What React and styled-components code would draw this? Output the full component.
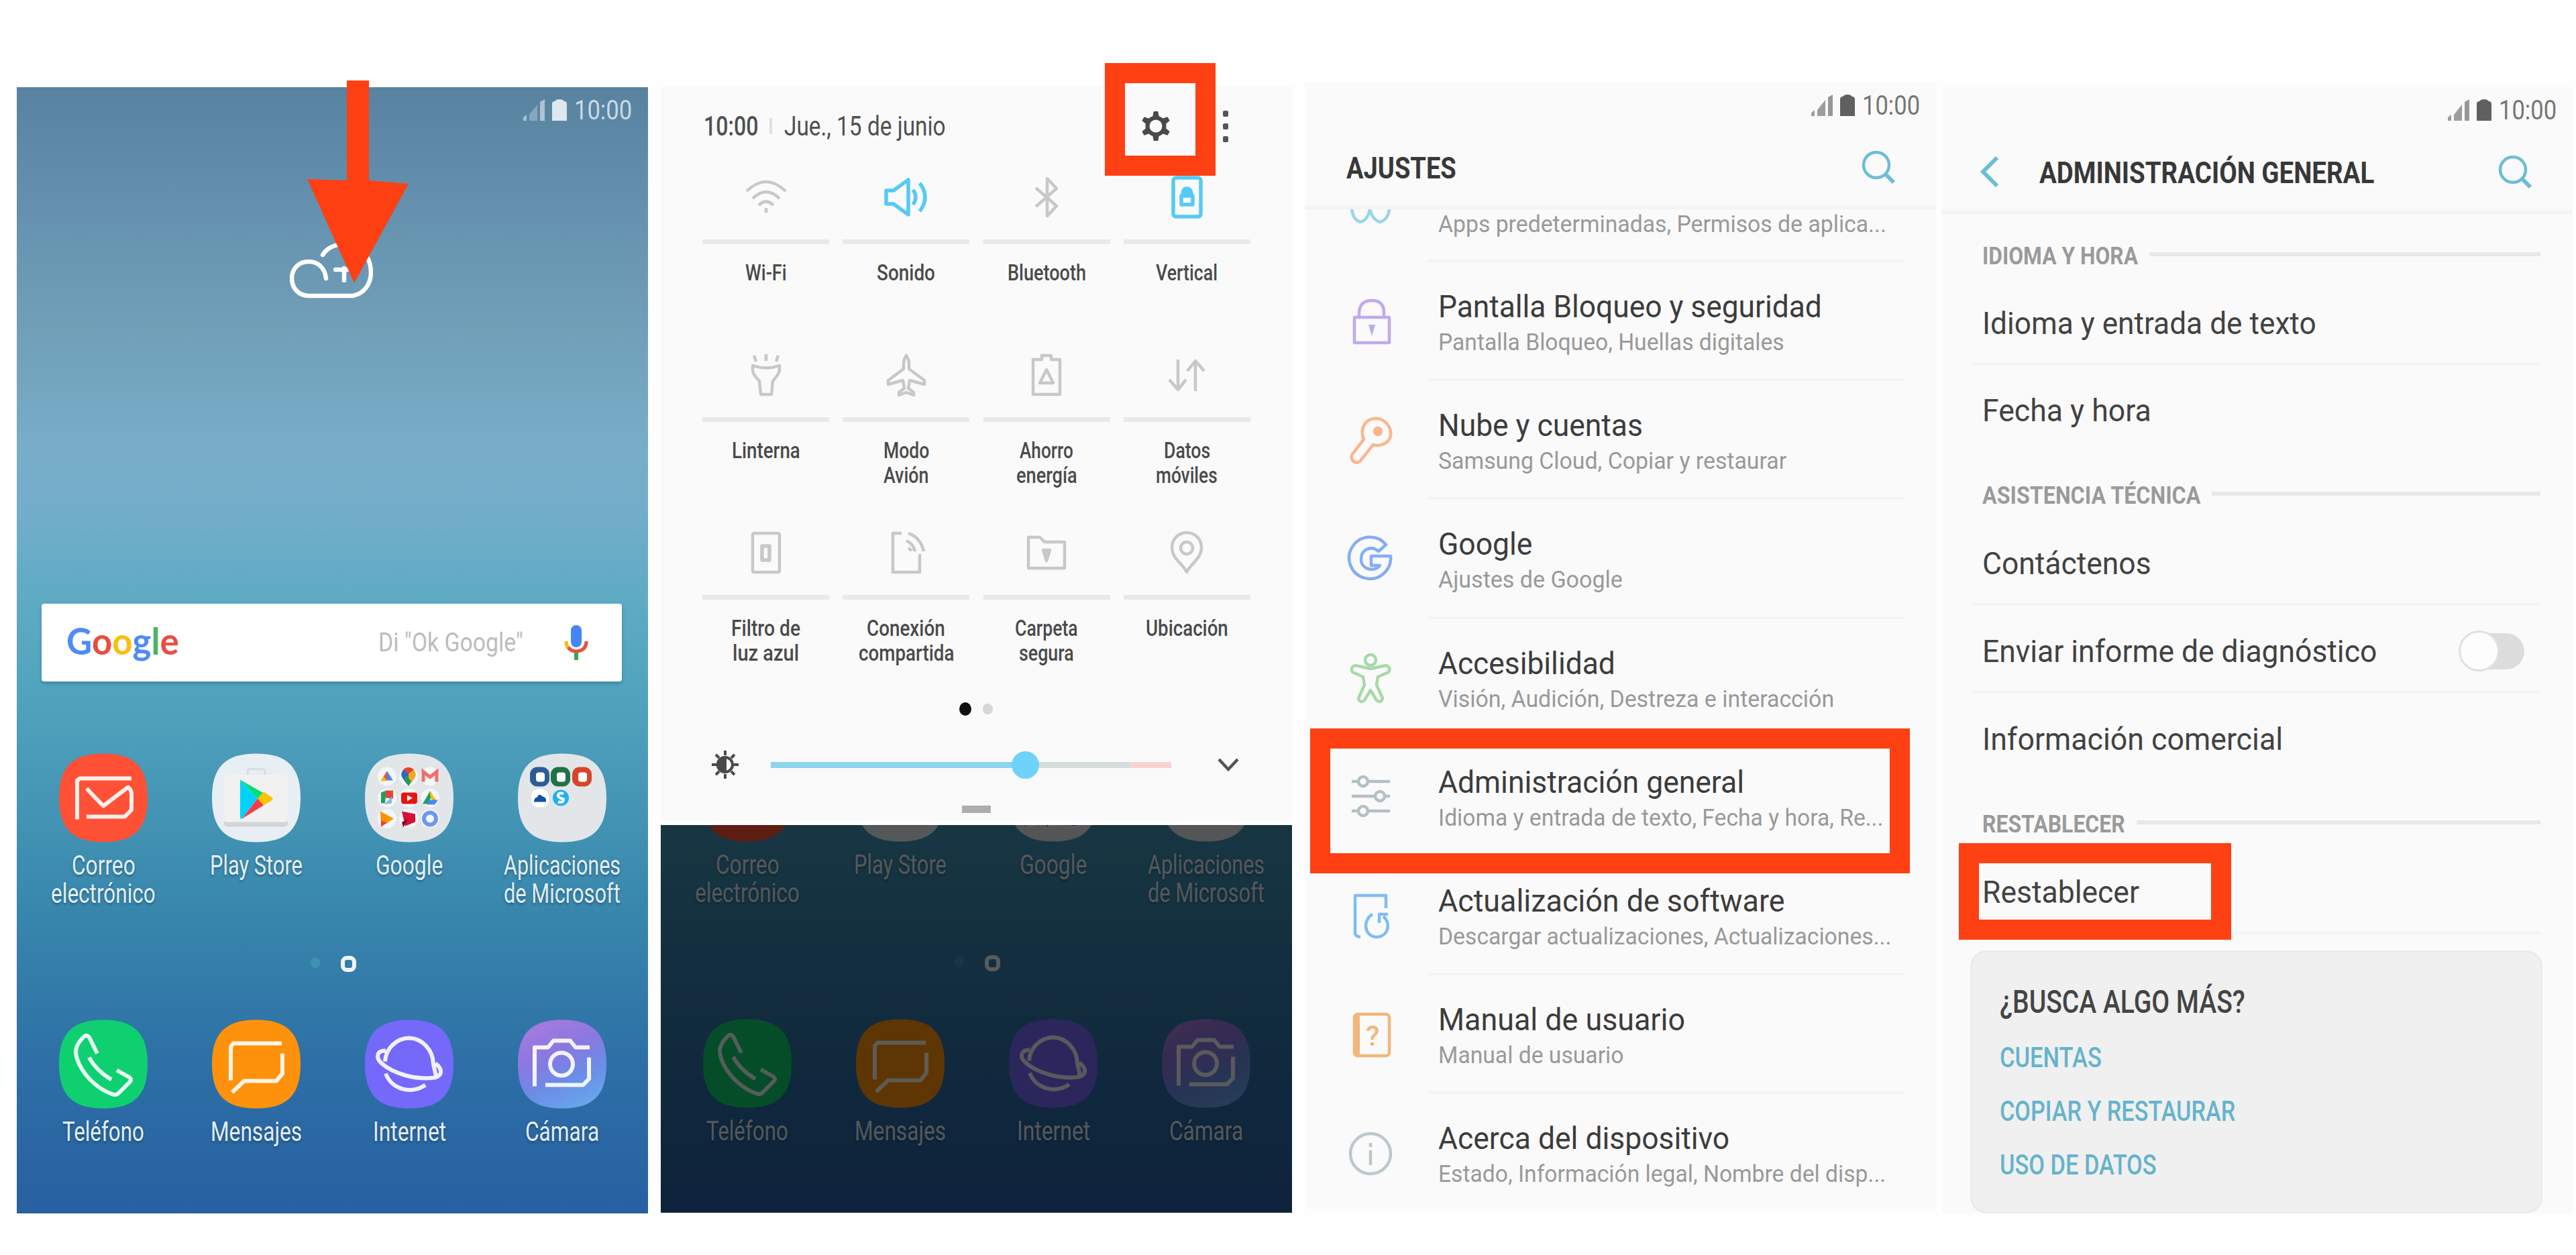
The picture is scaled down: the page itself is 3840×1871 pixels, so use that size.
import { useLayoutEffect, useRef, useState } from 'react';
import styled, { createGlobalStyle, css } from 'styled-components';

const GlobalStyle = createGlobalStyle`
  * {
    box-sizing: border-box;
  }
  body {
    margin: 0;
    background: #fefefe;
    font-family: Roboto, 'Liberation Sans', sans-serif;
  }
`;

const RED = '#ff4013';
const WALLPAPER =
  'linear-gradient(180deg, #5883a0 0%, #6490ad 10%, #71a0b9 22%, #78adc8 32%, #72adc9 38%, #60abc4 45%, #51a3bd 54%, #4495b5 64%, #3785ac 74%, #2d6fa6 87%, #2860a1 100%)';

const Page = styled.main`
  display: flex;
  align-items: flex-start;
  width: 3840px;
  height: 1871px;
  padding-left: 25px;
  overflow: hidden;
`;

const Phone = styled.section`
  position: relative;
  flex: none;
  display: flex;
  flex-direction: column;
  width: 941px;
  height: 1679px;
  margin-top: ${({ $top }) => $top}px;
  margin-right: ${({ $gap }) => $gap || 0}px;
  background: ${({ $bg }) => $bg || '#fafafa'};
`;

const Highlight = styled.div`
  position: absolute;
  left: ${({ $x }) => $x}px;
  top: ${({ $y }) => $y}px;
  width: ${({ $w }) => $w}px;
  height: ${({ $h }) => $h}px;
  border: 30px solid ${RED};
  z-index: 2;
`;

/* ---------- text squeezed to a given width ---------- */

const FitBox = styled.span`
  display: inline-block;
  white-space: nowrap;
  text-align: left;
`;

const FitInner = styled.span`
  display: inline-block;
  transform-origin: 0 50%;
`;

function Fit({ w, children }) {
  const ref = useRef(null);
  const [scale, setScale] = useState(1);

  useLayoutEffect(() => {
    setScale(w / ref.current.offsetWidth);
  }, [w]);

  return (
    <FitBox style={{ width: w }}>
      <FitInner ref={ref} style={{ transform: `scaleX(${scale})` }}>
        {children}
      </FitInner>
    </FitBox>
  );
}

/* ---------- status bar ---------- */

const StatusRow = styled.div`
  flex: none;
  display: flex;
  align-items: center;
  justify-content: flex-end;
  height: 68px;
  padding-right: 24px;
  font-size: 41px;
  line-height: 48px;
  color: ${({ $light }) => ($light ? '#c9dae4' : '#757575')};

  svg {
    margin-right: 10px;
  }
`;

function StatusBar({ light }) {
  return (
    <StatusRow $light={light}>
      <svg width="66" height="34" viewBox="0 0 66 34" fill="currentColor">
        <path d="M0 33V28L5 24V33Z" opacity=".7" />
        <path d="M9 33V24L21 9V33Z" opacity={light ? 0.4 : 0.7} />
        <path d="M25 33V5L32 1V33Z" opacity=".75" />
        <path
          d="M43 33V8Q43 4 47 4Q49 1 54 1Q59 1 61 4Q65 4 65 8V33Z"
          fill={light ? '#dce8ee' : '#606060'}
        />
      </svg>
      <Fit w={86}>10:00</Fit>
    </StatusRow>
  );
}

/* ---------- home screen ---------- */

const Cloud = styled.svg`
  flex: none;
  width: 124px;
  height: 85px;
  margin: 162px 0 0 407px;
  fill: none;
  stroke: #fff;
  stroke-width: 6.5;
  stroke-linecap: round;
`;

const Arrow = styled.svg`
  position: absolute;
  left: 430px;
  top: -12px;
  width: 158px;
  height: 306px;
  fill: ${RED};
`;

const SearchBar = styled.div`
  flex: none;
  display: flex;
  align-items: center;
  height: 116px;
  margin: 455px 39px 0 37px;
  padding: 0 50px 0 37px;
  background: #fff;
  border-radius: 4px;
  box-shadow: 0 3px 5px rgba(20, 70, 95, 0.35);
`;

const GoogleWord = styled.div`
  flex: 1;
  font-family: Lato, sans-serif;
  font-size: 55px;
  font-weight: 700;
  line-height: 60px;
  padding-bottom: 6px;
`;

const Letter = styled.span`
  color: ${({ $c }) => $c};
`;

const Hint = styled.div`
  margin-right: 61px;
  font-size: 39px;
  color: #bcbcbc;
`;

const AppGrid = styled.div`
  flex: none;
  display: grid;
  grid-template-columns: repeat(4, 228px);
  padding-left: 15px;
  margin-top: ${({ $mt }) => $mt}px;
`;

const App_ = styled.div`
  display: flex;
  flex-direction: column;
  align-items: center;
  gap: 14px;
`;

const AppLabel = styled.div`
  min-height: ${({ $lines }) => $lines * 42}px;
  display: flex;
  flex-direction: column;
  align-items: center;
  font-size: 40px;
  line-height: 42px;
  color: #e3eef3;
  text-shadow: 0 2px 4px rgba(0, 30, 60, 0.4);
`;

const HomeDots = styled.div`
  flex: none;
  display: flex;
  align-items: center;
  height: 24px;
  margin-top: 71px;
  padding-left: 438px;
  gap: 31px;
`;

const FaintDot = styled.i`
  width: 14px;
  height: 16px;
  margin-bottom: 4px;
  border-radius: 50%;
  background: #4a9fb8;
  opacity: 0.6;
`;

const HomeRing = styled.i`
  width: 23px;
  height: 24px;
  border-radius: 9px;
  border: 6px solid #eef5f8;
`;

const Squircle = ({ fill }) => (
  <path
    d="M66 0C112 0 132 20 132 66S112 132 66 132S0 112 0 66S20 0 66 0Z"
    fill={fill}
  />
);

const AppSvg = styled.svg`
  width: 132px;
  height: 133px;
  overflow: visible;
`;

const Glyph = styled.g`
  fill: none;
  stroke: #fff;
  stroke-opacity: 0.9;
  stroke-width: 6;
  stroke-linejoin: round;
`;

const MailIcon = () => (
  <AppSvg viewBox="0 0 132 132">
    <Squircle fill="#fe5136" />
    <Glyph>
      <path d="M27 98V40L31 37H108" />
      <path d="M41 52L66 78L103 50Q108 54 108 60V84L98 94H41" />
    </Glyph>
  </AppSvg>
);

const PlayIcon = () => (
  <AppSvg viewBox="0 0 132 132">
    <Squircle fill="#e7eff4" />
    <path d="M53 32V26Q53 23 57 23H75Q79 23 79 26V32" fill="none" stroke="#d6dde0" strokeWidth="3" />
    <rect x="18" y="34" width="95" height="75" rx="5" fill="#d4d5d6" />
    <rect x="18" y="32" width="95" height="70" rx="4" fill="#f1f1f1" />
    <path d="M42 39L68 67L45 97Q42 98 42 94Z" fill="#00d2fb" />
    <path d="M42 39L77 59L68 67Z" fill="#00e070" />
    <path d="M77 57L89 65Q92 67 89 70L77 77L68 67Z" fill="#ffc400" />
    <path d="M68 67L77 77L45 97Z" fill="#fb3b45" />
  </AppSvg>
);

const GoogleFolderIcon = () => (
  <AppSvg viewBox="0 0 132 132">
    <Squircle fill="#e2e6e9" />
    {[34, 66, 97].map((y) =>
      [33, 65, 97].map((x) => (
        <circle key={`${x}-${y}`} cx={x} cy={y} r="14" fill="#f4f6f7" />
      ))
    )}
    <path d="M33 26L24 40H33Z" fill="#ea4f3f" />
    <path d="M33 26L42 40H33Z" fill="#4688f1" />
    <path d="M28 34L33 41L24 41Z" fill="#fbbc05" />
    <path d="M65 48Q54 36 54 31A11 11 0 0 1 65 21Z" fill="#2f66c4" />
    <path d="M65 48Q76 36 76 31A11 11 0 0 0 65 21Z" fill="#f5a623" />
    <path d="M57 24A11 11 0 0 1 73 24L65 30Z" fill="#e34133" />
    <path d="M58 38L65 48L69 41L62 33Z" fill="#1e9d58" />
    <path d="M87 42V27L97 35L107 27V42" fill="none" stroke="#ee7067" strokeWidth="5" />
    <path d="M24 74V58L32 55L30 74Z" fill="#1fa15d" />
    <path d="M31 55H42V67L31 66Z" fill="#e4453a" />
    <path d="M29 76L40 64L40 74Z" fill="#8ab0ee" />
    <rect x="54" y="58" width="24" height="17" rx="4" fill="#e5160f" />
    <path d="M63 62L71 66L63 71Z" fill="#fff" />
    <path d="M97 56L86 75H93L101 62Z" fill="#1fa15d" />
    <path d="M97 56L108 72L100 70L97 62Z" fill="#fbbc05" />
    <path d="M92 76L96 69H109L104 76Z" fill="#4688f1" />
    <path d="M23 86L43 97L24 109Z" fill="#ff9100" />
    <path d="M24 100L33 103L24 109Z" fill="#e6422f" />
    <path d="M55 86L75 90V102L60 108Z" fill="#d90f3a" />
    <path d="M55 102L64 98L57 110Z" fill="#7c0b25" />
    <circle cx="97" cy="97" r="9" fill="none" stroke="#6f97ee" strokeWidth="6" />
  </AppSvg>
);

const MicrosoftFolderIcon = () => (
  <AppSvg viewBox="0 0 132 132">
    <Squircle fill="#e2e6e9" />
    {[
      [33, '#2d5c94'],
      [64, '#1d7444'],
      [96, '#d8442b'],
    ].map(([x, c]) => (
      <g key={x}>
        <rect x={x - 15} y="20" width="29" height="29" rx="11" fill={c} />
        <rect x={x - 6} y="28" width="13" height="14" rx="4" fill="#fff" />
      </g>
    ))}
    <rect x="20" y="53" width="26" height="27" rx="10" fill="#fff" />
    <path d="M24 72Q24 66 29 65Q31 58 37 64Q43 65 42 72Z" fill="#1250a6" />
    <circle cx="64" cy="66" r="12" fill="#1eb2ef" />
    <path d="M68 60Q60 57 60 63Q61 66 68 68Q68 74 60 72" fill="none" stroke="#fff" strokeWidth="4" />
  </AppSvg>
);

const PhoneIcon = () => (
  <AppSvg viewBox="0 0 132 132">
    <Squircle fill="#0fd071" />
    <Glyph>
      <path d="M57 50L45 26Q41 21 37 25C23 39 22 48 30 66C41 88 60 104 80 111Q86 113 90 108L106 92Q109 88 104 85L86 75" />
      <path d="M78 89C64 81 51 68 45 56" />
    </Glyph>
  </AppSvg>
);

const MessagesIcon = () => (
  <AppSvg viewBox="0 0 132 132">
    <Squircle fill="#ff920c" />
    <Glyph>
      <path d="M28 90V40L32 35H104" />
      <path d="M105 50V80L96 91H48L30 108" />
    </Glyph>
  </AppSvg>
);

const InternetIcon = () => (
  <AppSvg viewBox="0 0 132 132">
    <Squircle fill="#7469fa" />
    <Glyph>
      <path d="M30 62A37 37 0 0 1 66 27A37 40 0 0 1 102 66L106 84" />
      <path d="M31 46C19 45 15 55 24 64C42 80 75 90 104 86C116 83 116 73 105 65" />
      <path d="M31 80A38 36 0 0 0 90 97" />
    </Glyph>
  </AppSvg>
);

const CameraIcon = () => (
  <AppSvg viewBox="0 0 132 132">
    <defs>
      <linearGradient id="cam" x1="0.3" y1="0" x2="0.75" y2="1">
        <stop offset="0" stopColor="#a67ade" />
        <stop offset="0.35" stopColor="#8a78e0" />
        <stop offset="0.65" stopColor="#6c8ce6" />
        <stop offset="1" stopColor="#66a8ec" />
      </linearGradient>
    </defs>
    <Squircle fill="url(#cam)" />
    <Glyph>
      <path d="M25 99V41H45L53 31H78L86 41H107" />
      <path d="M106 56V88L97 97H41" />
      <circle cx="65" cy="66" r="17" />
    </Glyph>
  </AppSvg>
);

const apps = [
  { icon: MailIcon, lines: [['Correo', 95], ['electrónico', 156]] },
  { icon: PlayIcon, lines: [['Play Store', 138]] },
  { icon: GoogleFolderIcon, lines: [['Google', 100]] },
  { icon: MicrosoftFolderIcon, lines: [['Aplicaciones', 174], ['de Microsoft', 174]] },
];

const dock = [
  { icon: PhoneIcon, lines: [['Teléfono', 122]] },
  { icon: MessagesIcon, lines: [['Mensajes', 136]] },
  { icon: InternetIcon, lines: [['Internet', 109]] },
  { icon: CameraIcon, lines: [['Cámara', 110]] },
];

function AppRow({ items, lines, mt }) {
  return (
    <AppGrid $mt={mt}>
      {items.map(({ icon: Icon, lines: text }) => (
        <App_ key={text[0][0]}>
          <Icon />
          <AppLabel $lines={lines}>
            {text.map(([line, w]) => (
              <Fit key={line} w={w}>
                {line}
              </Fit>
            ))}
          </AppLabel>
        </App_>
      ))}
    </AppGrid>
  );
}

function HomeApps({ mt }) {
  return (
    <>
      <AppRow items={apps} lines={2} mt={mt} />
      <HomeDots>
        <FaintDot />
        <HomeRing />
      </HomeDots>
      <AppRow items={dock} lines={1} mt={71} />
    </>
  );
}

function HomeScreen() {
  return (
    <Phone $top={130} $gap={19} $bg={WALLPAPER}>
      <StatusBar light />
      <Cloud viewBox="0 0 124 85">
        <path d="M54 55C52 38 41 30 28 30C13 30 3 41 3 55C3 70 14 81 28 81H94C110 78 121 64 121 46C121 22 104 4 82 4C67 4 55 10 49 20" />
        <path d="M68 42H86M81 40V58" />
      </Cloud>
      <SearchBar>
        <GoogleWord>
          <Fit w={168}>
            <Letter $c="#4d8bf8">G</Letter>
            <Letter $c="#ea4d40">o</Letter>
            <Letter $c="#fbbe0d">o</Letter>
            <Letter $c="#4d8bf8">g</Letter>
            <Letter $c="#4bb563">l</Letter>
            <Letter $c="#ea4d40">e</Letter>
          </Fit>
        </GoogleWord>
        <Hint>
          <Fit w={216}>Di "Ok Google"</Fit>
        </Hint>
        <svg width="36" height="54" viewBox="0 0 36 54">
          <rect x="10" y="1" width="16" height="33" rx="8" fill="#4586f4" />
          <path d="M3 25Q3 31 6 35" fill="none" stroke="#fbbc05" strokeWidth="5" />
          <path d="M6 34Q10 40 18 40Q33 39 33 25" fill="none" stroke="#ea4f3f" strokeWidth="5" />
          <path d="M15 42H21V53H15Z" fill="#34a853" />
        </svg>
      </SearchBar>
      <HomeApps mt={107} />
      <Arrow viewBox="0 0 158 306">
        <path d="M62 2H95V151L154 156L73 304L3 149L62 151Z" />
      </Arrow>
    </Phone>
  );
}

/* ---------- quick settings panel ---------- */

const Panel = styled.div`
  flex: none;
  display: flex;
  flex-direction: column;
  height: 1101px;
  border-bottom: 6px solid #fff;
`;

const PanelHeader = styled.div`
  flex: none;
  display: flex;
  align-items: center;
  height: 125px;
  padding: 0 95px 7px 64px;
  font-size: 40px;
  color: #4f4f4f;
`;

const Clock = styled.div`
  font-weight: 500;
  margin-right: 17px;
`;

const Separator = styled.div`
  width: 4px;
  height: 24px;
  margin-right: 18px;
  background: #e0e0e0;
`;

const DateText = styled.div`
  flex: 1;
`;

const Kebab = styled.div`
  display: grid;
  gap: 10px;
  margin-left: 78px;

  i {
    width: 8px;
    height: 9px;
    border-radius: 2px;
    background: #555;
  }
`;

const Tiles = styled.div`
  flex: none;
  display: grid;
  grid-template-columns: repeat(4, 189px);
  grid-template-rows: 265px 265px 255px;
  column-gap: 20.3px;
  padding-left: 62px;
`;

const Tile = styled.div`
  display: flex;
  flex-direction: column;
  align-items: center;
  font-size: 34px;
  font-weight: 500;
  line-height: 37px;
  color: #4a4a4a;
`;

const TileIcon = styled.svg`
  width: 66px;
  height: 62px;
  margin: 9px 0 32px;
  overflow: visible;
  fill: none;
  stroke: ${({ $on }) => ($on ? '#55caf6' : '#c8c8c8')};
  stroke-width: ${({ $on }) => ($on ? 5.5 : 4.5)};
  stroke-linejoin: round;
`;

const TileLine = styled.div`
  flex: none;
  width: 100%;
  height: 7px;
  margin-bottom: 24px;
  background: #e9e9e9;
`;

const PanelDots = styled.div`
  flex: none;
  display: flex;
  align-items: center;
  justify-content: center;
  gap: 17px;
  height: 20px;
  margin-top: 8px;
  padding-right: 2px;
`;

const Dot = styled.i`
  width: ${({ $on }) => ($on ? 18 : 15)}px;
  height: ${({ $on }) => ($on ? 20 : 16)}px;
  border-radius: 50%;
  background: ${({ $on }) => ($on ? '#111' : '#d6d6d6')};
`;

const BrightnessRow = styled.div`
  flex: none;
  display: flex;
  align-items: center;
  height: 60px;
  margin-top: 43px;
  padding-left: 76px;
`;

const Track = styled.div`
  position: relative;
  display: flex;
  width: 597px;
  height: 9px;
  margin: 0 69px 0 48px;
`;

const Segment = styled.div`
  flex: ${({ $part }) => $part};
  background: ${({ $c }) => $c};
`;

const Knob = styled.div`
  position: absolute;
  left: 359px;
  top: -16px;
  width: 41px;
  height: 41px;
  border-radius: 50%;
  background: #6fd2fa;
`;

const Handle = styled.div`
  flex: none;
  align-self: center;
  width: 43px;
  height: 11px;
  margin-top: 31px;
  background: #adadad;
`;

const DimmedHome = styled.div`
  position: relative;
  display: flex;
  flex-direction: column;
  height: 578px;
  overflow: hidden;
  background: ${WALLPAPER} bottom / 100% 1679px no-repeat;

  &::after {
    content: '';
    position: absolute;
    inset: 0;
    background: rgba(0, 0, 0, 0.63);
  }
`;

const tiles = [
  {
    lines: [['Wi-Fi', 62]],
    art: (
      <>
        <path d="M4 22Q33-6 62 22M13 33Q33 13 53 33M22 43Q33 32 44 43" />
        <path d="M33 47V54" />
      </>
    ),
  },
  {
    on: true,
    lines: [['Sonido', 87]],
    art: <path d="M3 21H14L36 5V57L14 41H3ZM43 20Q51 31 43 42M53 10Q69 31 53 52" />,
  },
  {
    lines: [['Bluetooth', 117]],
    art: <path d="M17 17L48 44L34 59V3L48 18L17 45" />,
  },
  {
    on: true,
    lines: [['Vertical', 92]],
    art: (
      <>
        <rect x="13" y="2" width="41" height="58" rx="4" />
        <path d="M25 29H42V42H25Z" />
        <path d="M27 28Q27 18 33 18Q40 18 40 28Z" fill="#55caf6" />
      </>
    ),
  },
  {
    lines: [['Linterna', 102]],
    art: (
      <path d="M13 17Q33 24 53 17V24Q52 30 43 40L41 60H25L23 40Q13 30 13 24ZM33 0V10M15 2L18 11M51 2L48 11" />
    ),
  },
  {
    lines: [['Modo', 68], ['Avión', 67]],
    art: (
      <path d="M33 2C28 9 29 14 29 22L6 39V45L28 39L30 51L22 57V61L33 57L44 61V57L36 51L38 39L60 45V39L37 22C37 14 38 9 33 2Z" />
    ),
  },
  {
    lines: [['Ahorro', 80], ['energía', 91]],
    art: <path d="M26 2H40V8H53V60H13V8H26ZM33 23L43 43H23Z" />,
  },
  {
    lines: [['Datos', 69], ['móviles', 92]],
    art: <path d="M20 8V53M7 38L20 53L32 38M46 55V10M34 25L46 10L59 25" />,
  },
  {
    lines: [['Filtro de', 103], ['luz azul', 99]],
    art: (
      <>
        <rect x="13" y="2" width="40" height="58" rx="2" />
        <path d="M27 21H38V42H27Z" strokeWidth="5.5" />
      </>
    ),
  },
  {
    lines: [['Conexión', 117], ['compartida', 142]],
    art: <path d="M26 2H13V60H53V33M36 2Q54 8 59 29M33 13Q43 17 46 29M36 24L41 28" />,
  },
  {
    lines: [['Carpeta', 94], ['segura', 82]],
    art: (
      <>
        <path d="M6 54V8H23L30 15H60V54Z" />
        <path d="M28 27H38L33 43Z" fill="#cbcbcb" />
      </>
    ),
  },
  {
    lines: [['Ubicación', 123]],
    art: (
      <>
        <path d="M33 60C27 47 11 40 11 23A22 22 0 0 1 55 23C55 40 39 47 33 60Z" />
        <circle cx="33" cy="24" r="9" />
      </>
    ),
  },
];

const GearIcon = () => (
  <svg width="44" height="48" viewBox="0 0 44 48" stroke="#4a4a4a" fill="none">
    {[0, 60, 120, 180, 240, 300].map((angle) => (
      <path
        key={angle}
        d="M18 12L19.5 3H24.5L26 12Z"
        fill="#4a4a4a"
        strokeWidth="2"
        strokeLinejoin="round"
        transform={`rotate(${angle} 22 24)`}
      />
    ))}
    <circle cx="22" cy="24" r="12.5" strokeWidth="6" />
  </svg>
);

function QuickPanelScreen() {
  return (
    <Phone $top={129} $gap={19}>
      <Panel>
        <PanelHeader>
          <Clock>
            <Fit w={81}>10:00</Fit>
          </Clock>
          <Separator />
          <DateText>
            <Fit w={241}>Jue., 15 de junio</Fit>
          </DateText>
          <GearIcon />
          <Kebab>
            <i />
            <i />
            <i />
          </Kebab>
        </PanelHeader>
        <Tiles>
          {tiles.map(({ on, lines, art }) => (
            <Tile key={lines[0][0]}>
              <TileIcon viewBox="0 0 66 62" $on={on}>
                {art}
              </TileIcon>
              <TileLine />
              {lines.map(([line, w]) => (
                <Fit key={line} w={w}>
                  {line}
                </Fit>
              ))}
            </Tile>
          ))}
        </Tiles>
        <PanelDots>
          <Dot $on />
          <Dot />
        </PanelDots>
        <BrightnessRow>
          <svg width="40" height="42" viewBox="0 0 40 42" stroke="#4a4a4a" strokeWidth="4">
            <path d="M20 0V7M20 35V42M0 21H7M33 21H40M6 6L11 11M34 6L29 11M6 36L11 31M34 36L29 31" />
            <circle cx="20" cy="21" r="11" fill="#fafafa" />
            <path d="M20 10A11 11 0 0 0 20 32Z" fill="#4a4a4a" />
          </svg>
          <Track>
            <Segment $part={379} $c="#8ed4ed" />
            <Segment $part={158} $c="#d3dddc" />
            <Segment $part={60} $c="#fbd2cf" />
            <Knob />
          </Track>
          <svg width="32" height="22" viewBox="0 0 32 22" fill="none" stroke="#555" strokeWidth="4.5">
            <path d="M2 3L16 18L30 3" />
          </svg>
        </BrightnessRow>
        <Handle />
      </Panel>
      <DimmedHome>
        <HomeApps mt={-108} />
      </DimmedHome>
      <Highlight $x={662} $y={-35} $w={165} $h={168} />
    </Phone>
  );
}

/* ---------- settings ---------- */

const Header = styled.header`
  flex: none;
  display: flex;
  align-items: center;
  height: 121px;
  padding: ${({ $back }) => ($back ? '0 60px 0 58px' : '0 60px 0 62px')};
  border-bottom: 5px solid #f3f3f3;
  font-size: 45px;
  font-weight: 700;
  color: #383838;
`;

const HeaderTitle = styled.h1`
  flex: 1;
  margin: 0;
  padding-top: 2px;
  font: inherit;
`;

const BackIcon = styled.svg`
  width: 28px;
  height: 46px;
  margin-right: 60px;
  fill: none;
  stroke: #6bbdd6;
  stroke-width: 6;
`;

const SearchIcon = () => (
  <svg width="51" height="51" viewBox="0 0 51 51" fill="none" stroke="#6bbdd6" strokeWidth="4.5">
    <circle cx="22" cy="22" r="19" />
    <path d="M35 35L48 48" strokeWidth="6" />
  </svg>
);

const List = styled.div`
  flex: 1;
  min-height: 0;
  overflow: hidden;
`;

const Row = styled.div`
  display: flex;
  height: 177.2px;
  ${({ $cut }) =>
    $cut &&
    css`
      height: 79px;
    `}
`;

const RowIcon = styled.div`
  flex: none;
  width: 184px;
  display: flex;
  align-items: ${({ $cut }) => ($cut ? 'flex-start' : 'center')};
  padding-left: 67px;

  svg {
    overflow: visible;
    fill: none;
    stroke: ${({ $c }) => $c};
    stroke-width: 4.5;
    stroke-linejoin: round;
  }
`;

const RowText = styled.div`
  width: 710px;
  display: flex;
  flex-direction: column;
  padding: ${({ $cut }) => ($cut ? '2px' : '39px')} 0 0 15px;
  border-bottom: 4px solid #f4f4f4;
`;

const RowTitle = styled.div`
  font-size: 47px;
  line-height: 54px;
  margin-bottom: 6px;
  color: #3c3c3c;
`;

const RowSub = styled.div`
  font-size: 35px;
  line-height: 42px;
  color: #999;
`;

const rows = [
  {
    title: ['Pantalla Bloqueo y seguridad', 572],
    sub: ['Pantalla Bloqueo, Huellas digitales', 516],
    color: '#bfaaf0',
    art: (
      <>
        <path d="M7 29H59V67H7ZM14 28V22Q15 4 33 4Q51 4 51 22V28" />
        <path d="M28 40H38L33 57Z" fill="#bfaaf0" stroke="none" />
      </>
    ),
  },
  {
    title: ['Nube y cuentas', 305],
    sub: ['Samsung Cloud, Copiar y restaurar', 519],
    color: '#fbb68a',
    art: (
      <>
        <path d="M21 34C14 18 24 2 40 3C56 4 64 20 60 32C56 41 44 45 35 42L15 67Q9 71 4 65Q1 60 4 56Z" />
        <circle cx="42" cy="22" r="5" fill="#fbb68a" />
      </>
    ),
  },
  {
    title: ['Google', 140],
    sub: ['Ajustes de Google', 275],
    color: '#84adf5',
    art: (
      <path d="M54 14A31 31 0 1 0 61 31H32V45H45C38 55 17 52 17 36C17 20 33 15 43 24Z" />
    ),
  },
  {
    title: ['Accesibilidad', 264],
    sub: ['Visión, Audición, Destreza e interacción', 590],
    color: '#a8d9a9',
    art: (
      <>
        <circle cx="31" cy="9" r="8" />
        <path d="M31 22L8 17Q0 20 4 27L20 34L22 46L13 66Q15 74 22 69L31 54L40 69Q47 74 49 66L40 46L42 34L58 27Q62 20 54 17Z" />
      </>
    ),
  },
  {
    title: ['Administración general', 456],
    sub: ['Idioma y entrada de texto, Fecha y hora, Re...', 663],
    color: '#b3c0c5',
    art: (
      <>
        <path d="M3 13H12M28 13H60M3 35H36M54 35H60M3 57H12M28 57H60" />
        <circle cx="20" cy="13" r="7" />
        <circle cx="45" cy="35" r="7" />
        <circle cx="20" cy="57" r="7" />
      </>
    ),
  },
  {
    title: ['Actualización de software', 516],
    sub: ['Descargar actualizaciones, Actualizaciones...', 675],
    color: '#7fbdf5',
    art: <path d="M54 24V5H8V61Q8 66 16 67M34 33C20 40 20 65 39 67C58 67 62 46 50 36M44 46V33H57" />,
  },
  {
    title: ['Manual de usuario', 368],
    sub: ['Manual de usuario', 276],
    color: '#f3b57a',
    art: (
      <>
        <rect x="7" y="5" width="52" height="62" rx="5" />
        <path d="M11 5V67" strokeWidth="8" />
        <text x="24" y="52" fontSize="42" fontWeight="500" fill="#f3b57a" stroke="none">
          ?
        </text>
      </>
    ),
  },
  {
    title: ['Acerca del dispositivo', 434],
    sub: ['Estado, Información legal, Nombre del disp...', 667],
    color: '#bcc8cc',
    art: (
      <>
        <circle cx="31" cy="36" r="30" />
        <path d="M31 31V53M31 20V26" />
      </>
    ),
  },
];

function SettingsScreen() {
  return (
    <Phone $top={123} $gap={8}>
      <StatusBar />
      <Header>
        <HeaderTitle>
          <Fit w={164}>AJUSTES</Fit>
        </HeaderTitle>
        <SearchIcon />
      </Header>
      <List>
        <Row $cut>
          <RowIcon $c="#9bd5e9" $cut>
            <svg width="62" height="22" viewBox="0 0 62 22">
              <path d="M3 0Q5 16 16 19Q27 16 30 0Q34 16 45 19Q57 16 59 0" />
            </svg>
          </RowIcon>
          <RowText $cut>
            <RowSub>
              <Fit w={668}>Apps predeterminadas, Permisos de aplica...</Fit>
            </RowSub>
          </RowText>
        </Row>
        {rows.map(({ title, sub, color, art }) => (
          <Row key={title[0]}>
            <RowIcon $c={color}>
              <svg width="62" height="72" viewBox="0 0 62 72">
                {art}
              </svg>
            </RowIcon>
            <RowText>
              <RowTitle>
                <Fit w={title[1]}>{title[0]}</Fit>
              </RowTitle>
              <RowSub>
                <Fit w={sub[1]}>{sub[0]}</Fit>
              </RowSub>
            </RowText>
          </Row>
        ))}
      </List>
      <Highlight $x={8} $y={963} $w={894} $h={216} />
    </Phone>
  );
}

/* ---------- general management ---------- */

const SectionHead = styled.div`
  flex: none;
  display: flex;
  align-items: center;
  gap: 17px;
  height: ${({ $h }) => $h || 98}px;
  padding: 30px 48px 0 61px;
  font-size: 36px;
  font-weight: 700;
  color: #9a9a9a;

  &::after {
    content: '';
    flex: 1;
    height: 6px;
    margin-bottom: 7px;
    background: #e8e8e8;
  }
`;

const Item = styled.div`
  flex: none;
  display: flex;
  align-items: center;
  justify-content: space-between;
  height: ${({ $h }) => $h || 130}px;
  margin: 0 48px 0 46px;
  padding: 8px 24px 0 15px;
  border-bottom: 4px solid ${({ $last }) => ($last ? 'transparent' : '#f4f4f4')};
  font-size: 46px;
  color: #424242;
`;

const Toggle = styled.div`
  display: flex;
  align-items: center;
  width: 92px;
  height: 54px;
  border-radius: 27px;
  background: #dcdcdc;
`;

const ToggleKnob = styled.div`
  flex: none;
  width: 61px;
  height: 61px;
  margin-left: -6px;
  border-radius: 50%;
  border: 3px solid #e0e0e0;
  background: #fdfdfd;
`;

const MoreCard = styled.div`
  flex: none;
  height: 392px;
  margin: 24px 45px 0 43px;
  padding: 44px 0 0 41px;
  background: #f0f0f0;
  border: 3px solid #ebebeb;
  border-radius: 24px;
`;

const MoreTitle = styled.div`
  margin-bottom: 13px;
  font-size: 48px;
  font-weight: 500;
  line-height: 60px;
  color: #444;
`;

const MoreLink = styled.div`
  font-size: 42px;
  font-weight: 500;
  line-height: 80px;
  color: #66b3cc;
`;

function GeneralScreen() {
  return (
    <Phone $top={130}>
      <StatusBar />
      <Header $back>
        <BackIcon viewBox="0 0 28 46">
          <path d="M25 2L4 23L25 44" />
        </BackIcon>
        <HeaderTitle>
          <Fit w={499}>ADMINISTRACIÓN GENERAL</Fit>
        </HeaderTitle>
        <SearchIcon />
      </Header>
      <SectionHead $h={96}>
        <Fit w={232}>IDIOMA Y HORA</Fit>
      </SectionHead>
      <Item>
        <Fit w={498}>Idioma y entrada de texto</Fit>
      </Item>
      <Item $last>
        <Fit w={252}>Fecha y hora</Fit>
      </Item>
      <SectionHead>
        <Fit w={325}>ASISTENCIA TÉCNICA</Fit>
      </SectionHead>
      <Item>
        <Fit w={252}>Contáctenos</Fit>
      </Item>
      <Item $h={131}>
        <Fit w={588}>Enviar informe de diagnóstico</Fit>
        <Toggle>
          <ToggleKnob />
        </Toggle>
      </Item>
      <Item $h={131} $last>
        <Fit w={448}>Información comercial</Fit>
      </Item>
      <SectionHead>
        <Fit w={213}>RESTABLECER</Fit>
      </SectionHead>
      <Item>
        <Fit w={234}>Restablecer</Fit>
      </Item>
      <MoreCard>
        <MoreTitle>
          <Fit w={366}>¿BUSCA ALGO MÁS?</Fit>
        </MoreTitle>
        <MoreLink>
          <Fit w={152}>CUENTAS</Fit>
        </MoreLink>
        <MoreLink>
          <Fit w={351}>COPIAR Y RESTAURAR</Fit>
        </MoreLink>
        <MoreLink>
          <Fit w={234}>USO DE DATOS</Fit>
        </MoreLink>
      </MoreCard>
      <Highlight $x={26} $y={1127} $w={406} $h={144} />
    </Phone>
  );
}

export default function App() {
  return (
    <>
      <GlobalStyle />
      <Page>
        <HomeScreen />
        <QuickPanelScreen />
        <SettingsScreen />
        <GeneralScreen />
      </Page>
    </>
  );
}
